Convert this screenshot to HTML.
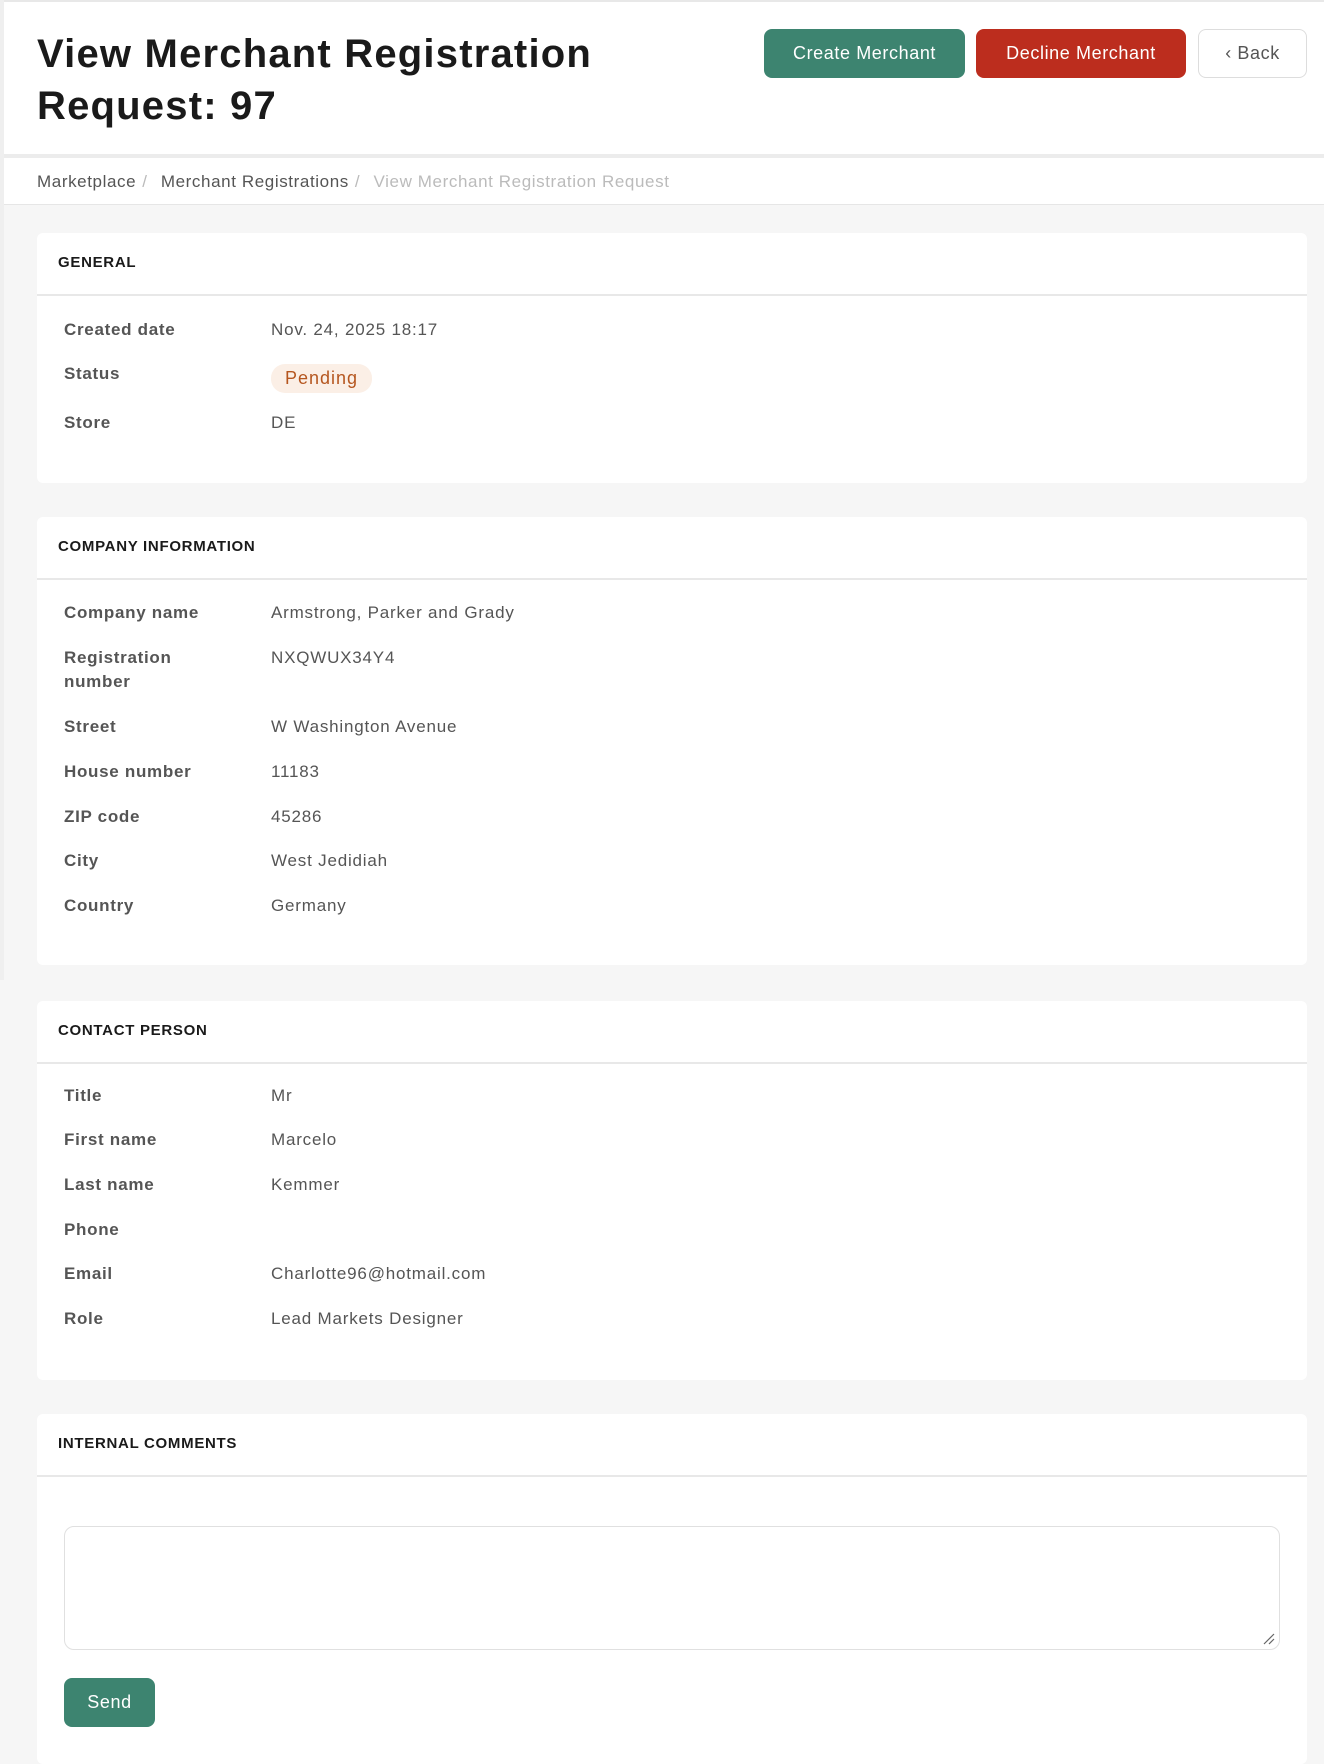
<!DOCTYPE html>
<html><head><meta charset="utf-8"><style>
*{margin:0;padding:0;box-sizing:border-box}
body{width:1324px;height:1752px;background:#f6f6f6;font-family:"Liberation Sans",sans-serif;position:relative;overflow:hidden;color:#555}
.hdr{position:absolute;left:4px;top:2px;width:1320px;height:152px;background:#fff}
.topline{position:absolute;left:0;top:0;width:1324px;height:2px;background:#e8e8e8}
.sideline{position:absolute;left:0;top:0;width:4px;height:980px;background:#efefef}
h1{position:absolute;left:37px;top:28px;font-size:40px;line-height:52px;font-weight:bold;color:#1a1a1a;letter-spacing:1.2px}
.btn{position:absolute;top:29px;height:49px;border-radius:8px;color:#fff;font-size:18px;letter-spacing:0.6px;display:flex;align-items:center;justify-content:center}
.sep{position:absolute;left:4px;top:154px;width:1320px;height:4px;background:#ececec}
.bc{position:absolute;left:4px;top:158px;width:1320px;height:47px;background:#fff;border-bottom:1px solid #e6e6e6;font-size:17px;letter-spacing:0.6px;line-height:47px;padding-left:33px;color:#555}
.bc span.s{color:#bbb;margin:0 8px 0 6px}
.card{position:absolute;left:37px;width:1270px;background:#fff;border-radius:6px}
.ch{height:63px;border-bottom:2px solid #e8e8e8;font-size:15px;letter-spacing:0.7px;font-weight:bold;color:#1a1a1a;line-height:60px;padding-left:21px}
.l{position:absolute;left:27px;font-size:17px;letter-spacing:0.7px;font-weight:bold;color:#555;line-height:24px}
.v{position:absolute;left:234px;font-size:17px;letter-spacing:0.8px;color:#555;line-height:24px}
</style></head><body>
<div class="topline"></div><div class="sideline"></div>
<div class="hdr"></div>
<h1>View Merchant Registration<br>Request: 97</h1>
<div class="btn" style="left:764px;width:201px;background:#3d8470">Create Merchant</div>
<div class="btn" style="left:976px;width:210px;background:#bc2d1e">Decline Merchant</div>
<div class="btn" style="left:1198px;width:109px;background:#fff;border:1px solid #ddd;color:#555">&#8249;&nbsp;Back</div>
<div class="sep"></div>
<div class="bc">Marketplace<span class="s">/</span> Merchant Registrations<span class="s">/</span> <span style="color:#bbb">View Merchant Registration Request</span></div>

<div class="card" style="top:233px;height:250px">
<div class="ch">GENERAL</div>
<div class="l" style="top:85px">Created date</div><div class="v" style="top:85px">Nov. 24, 2025 18:17</div>
<div class="l" style="top:129px">Status</div><div class="v" style="top:131px;left:234px;background:#fbefe6;color:#b5561f;border-radius:14px;padding:2px 14px;line-height:25px;font-size:18px;letter-spacing:1px">Pending</div>
<div class="l" style="top:178px">Store</div><div class="v" style="top:178px">DE</div>
</div>

<div class="card" style="top:517px;height:448px">
<div class="ch">COMPANY INFORMATION</div>
<div class="l" style="top:84px">Company name</div><div class="v" style="top:84px">Armstrong, Parker and Grady</div>
<div class="l" style="top:129px">Registration<br>number</div><div class="v" style="top:129px">NXQWUX34Y4</div>
<div class="l" style="top:198px">Street</div><div class="v" style="top:198px">W Washington Avenue</div>
<div class="l" style="top:243px">House number</div><div class="v" style="top:243px">11183</div>
<div class="l" style="top:288px">ZIP code</div><div class="v" style="top:288px">45286</div>
<div class="l" style="top:332px">City</div><div class="v" style="top:332px">West Jedidiah</div>
<div class="l" style="top:377px">Country</div><div class="v" style="top:377px">Germany</div>
</div>

<div class="card" style="top:1001px;height:379px">
<div class="ch">CONTACT PERSON</div>
<div class="l" style="top:83px">Title</div><div class="v" style="top:83px">Mr</div>
<div class="l" style="top:127px">First name</div><div class="v" style="top:127px">Marcelo</div>
<div class="l" style="top:172px">Last name</div><div class="v" style="top:172px">Kemmer</div>
<div class="l" style="top:217px">Phone</div>
<div class="l" style="top:261px">Email</div><div class="v" style="top:261px">Charlotte96@hotmail.com</div>
<div class="l" style="top:306px">Role</div><div class="v" style="top:306px">Lead Markets Designer</div>
</div>

<div class="card" style="top:1414px;height:350px">
<div class="ch">INTERNAL COMMENTS</div>
<div style="position:absolute;left:27px;top:112px;width:1216px;height:124px;border:1px solid #e0e0e0;border-radius:10px">
<svg style="position:absolute;right:4px;bottom:4px" width="12" height="12"><path d="M1 11L11 1M6 11L11 6" stroke="#666" stroke-width="1.2"/></svg></div>
<div style="position:absolute;left:27px;top:264px;width:91px;height:49px;background:#3d8470;border-radius:8px;color:#fff;font-size:18px;letter-spacing:0.6px;display:flex;align-items:center;justify-content:center">Send</div>
</div>
</body></html>
